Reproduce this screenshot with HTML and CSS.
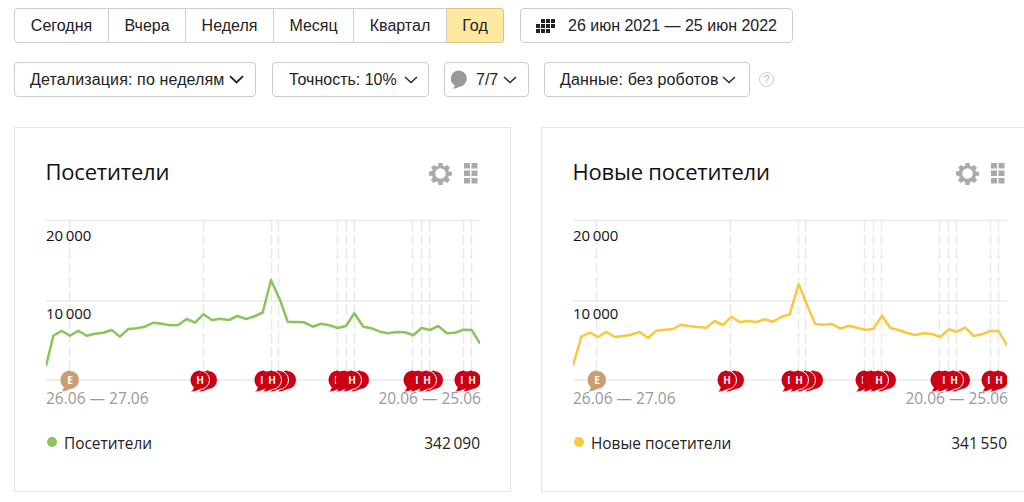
FILE: index.html
```html
<!DOCTYPE html>
<html lang="ru">
<head>
<meta charset="utf-8">
<title>Посетители</title>
<link rel="stylesheet" href="styles.css">
</head>
<body>
<svg class="defs" width="0" height="0" aria-hidden="true">
  <defs>
    <g id="bub">
      <path d="M-6.2 7.2A9.5 9.5 0 1 1-1 9.45Q-5 11.8-8.8 11.6Q-6.5 10-6.2 7.2Z"/>
      <path class="arc" d="M0-9.5A9.5 9.5 0 0 1 0 9.5"/>
    </g>
    <g id="marks">
      <g class="bubble"><use href="#bub" x="162" y="170"/></g>
      <g class="bubble"><use href="#bub" x="154" y="170"/><text x="154" y="174">Н</text></g>
      <g class="bubble"><use href="#bub" x="241" y="170"/></g>
      <g class="bubble"><use href="#bub" x="233" y="170"/></g>
      <g class="bubble"><use href="#bub" x="218" y="170"/><text x="218" y="174">Н</text></g>
      <g class="bubble"><use href="#bub" x="226" y="170"/><text x="226" y="174">Н</text></g>
      <g class="bubble"><use href="#bub" x="314" y="170"/></g>
      <g class="bubble"><use href="#bub" x="292" y="170"/><text x="292" y="174">Н</text></g>
      <g class="bubble"><use href="#bub" x="299" y="170"/></g>
      <g class="bubble"><use href="#bub" x="306" y="170"/><text x="306" y="174">Н</text></g>
      <g class="bubble"><use href="#bub" x="388" y="170"/></g>
      <g class="bubble"><use href="#bub" x="367" y="170"/></g>
      <g class="bubble"><use href="#bub" x="373" y="170"/><text x="373" y="174">Н</text></g>
      <g class="bubble"><use href="#bub" x="381" y="170"/><text x="381" y="174">Н</text></g>
      <g class="bubble"><use href="#bub" x="418" y="170"/><text x="418" y="174">Н</text></g>
      <g class="bubble"><use href="#bub" x="426" y="170"/><text x="426" y="174">Н</text></g>
      <g class="bubble brown"><use href="#bub" x="24" y="170"/><text x="24" y="174">Е</text></g>
    </g>
    <g id="grid">
      <path class="hline" d="M0 10.5H434M0 91H434M0 170H434"/>
      <path class="vline" d="M23.5 11V170M157.5 11V170M225.5 11V170M232.5 11V170M291.5 11V170M300.5 11V170M308.5 11V170M366.5 11V170M375.5 11V170M383.5 11V170M417.5 11V170M425.5 11V170"/>
    </g>
  </defs>
</svg>

<div class="toolbar">
  <div class="row">
    <div class="segments">
      <button class="seg s1">Сегодня</button>
      <button class="seg s2">Вчера</button>
      <button class="seg s3">Неделя</button>
      <button class="seg s4">Месяц</button>
      <button class="seg s5">Квартал</button>
      <button class="seg s6 active">Год</button>
    </div>
    <button class="btn date">
      <svg class="cal" width="19" height="14" viewBox="0 0 19 14">
        <path d="M5 0h4v4H5zM10 0h4v4h-4zM15 0h4v4h-4zM0 5h4v4H0zM5 5h4v4H5zM10 5h4v4h-4zM15 5h4v4h-4zM0 10h4v4H0zM5 10h4v4H5zM10 10h4v4h-4z"/>
      </svg>
      <span>26 июн 2021 — 25 июн 2022</span>
    </button>
  </div>
  <div class="row second">
    <button class="btn b1"><span class="wide">Детализация: по неделям</span><svg class="chev" width="15" height="9" viewBox="0 0 15 9"><path d="M1 1.2l6.500 6.300L14 1.200"/></svg></button>
    <button class="btn b2">Точность: 10%<svg class="chev thin" width="14" height="8" viewBox="0 0 14 8"><path d="M1 1l6 5.500L13 1"/></svg></button>
    <button class="btn b3"><svg class="comment" width="17" height="19" viewBox="0 0 17 19"><path d="M8.500 0.500a8 8 0 0 1 1.500 15.900C8 17.600 5.500 18.600 2.800 18.600 4.200 17.400 4.600 16.200 4.600 15.200A8 8 0 0 1 8.500 0.500Z"/></svg><span class="count">7/7</span><svg class="chev thin" width="14" height="8" viewBox="0 0 14 8"><path d="M1 1l6 5.500L13 1"/></svg></button>
    <button class="btn b4"><span class="wide">Данные: без роботов</span><svg class="chev thin" width="14" height="8" viewBox="0 0 14 8"><path d="M1 1l6 5.500L13 1"/></svg></button>
    <span class="help">?</span>
  </div>
</div>

<div class="cards">
  <section class="card">
    <header class="card-head">
      <h2>Посетители</h2>
      <svg class="gear" width="23" height="23" viewBox="0 0 24 24"><path fill-rule="evenodd" d="M10 1h4l.6 3.100 1.700.7L19 3l2.900 2.900-1.800 2.700.7 1.700L24 10v4l-3.200.6-.7 1.700L21.900 19 19 21.900l-2.700-1.800-1.700.7L14 24h-4l-.6-3.200-1.700-.7L5 21.900 2.100 19l1.800-2.700-.7-1.700L0 14v-4l3.200-.7.7-1.700L2.100 5.900 5 3l2.700 1.800 1.700-.7ZM12 6.500a5.500 5.500 0 1 0 0 11 5.500 5.500 0 0 0 0-11Z"/></svg>
      <svg class="tiles" width="14" height="21" viewBox="0 0 14 21"><path d="M0 0h6v5.500H0zM7.500 0h6v5.500h-6zM0 7.500h6v5.500H0zM7.500 7.500h6v5.500h-6zM0 15h6v5.500H0zM7.500 15h6v5.500h-6z"/></svg>
    </header>
    <div class="chart">
      <svg class="plot" width="434" height="190" viewBox="0 0 434 190">
        <use href="#grid"/>
        <polyline class="series green" points="0,156 7.300,125.700 15.700,120.700 24,125.700 32.300,120.700 40.700,125.700 49,123.700 57.300,122.700 65.700,120 74,126.700 82.300,119 90.700,118.300 99,116.700 107.300,112.700 115.700,113.700 124,115.300 132.300,115 140.700,109 149,112.700 157.300,104.300 166,110 174,108.700 183,110 191.300,106 200,109 208,106.500 216.700,102.500 225,70 234,90 241.700,111.700 250,112 258.300,112.300 266.700,116.700 275,113.700 283.300,115.300 291.700,118 300,116 308.300,103.300 317.300,116.700 325.700,118.300 334,121.700 342.300,123.300 350.700,122 359,122.300 367.300,125.300 375.700,118 384,120 392.300,116 400.700,123.300 409,122.700 417.300,119.700 425.700,120 434,133.700"/>
        <use href="#marks"/>
      </svg>
      <span class="y y20">20&thinsp;000</span>
      <span class="y y10">10&thinsp;000</span>
      <div class="dates"><span>26.06 — 27.06</span><span>20.06 — 25.06</span></div>
    </div>
    <div class="legend">
      <span class="dot green-dot"></span>
      <span class="name">Посетители</span>
      <span class="total">342&thinsp;090</span>
    </div>
  </section>

  <section class="card">
    <header class="card-head">
      <h2>Новые посетители</h2>
      <svg class="gear" width="23" height="23" viewBox="0 0 24 24"><path fill-rule="evenodd" d="M10 1h4l.6 3.100 1.700.7L19 3l2.900 2.900-1.800 2.700.7 1.700L24 10v4l-3.200.6-.7 1.700L21.900 19 19 21.900l-2.700-1.800-1.700.7L14 24h-4l-.6-3.200-1.700-.7L5 21.900 2.100 19l1.800-2.700-.7-1.700L0 14v-4l3.200-.7.7-1.700L2.100 5.900 5 3l2.700 1.800 1.700-.7ZM12 6.500a5.500 5.500 0 1 0 0 11 5.500 5.500 0 0 0 0-11Z"/></svg>
      <svg class="tiles" width="14" height="21" viewBox="0 0 14 21"><path d="M0 0h6v5.500H0zM7.500 0h6v5.500h-6zM0 7.500h6v5.500H0zM7.500 7.500h6v5.500h-6zM0 15h6v5.500H0zM7.500 15h6v5.500h-6z"/></svg>
    </header>
    <div class="chart">
      <svg class="plot" width="434" height="190" viewBox="0 0 434 190">
        <use href="#grid"/>
        <polyline class="series yellow" points="0,155.700 8.300,126.700 16.700,122.700 25,127 33.300,122 41.700,127 50,126 58.300,124.700 66.700,122 75,128 83.300,120.700 91.700,119.700 100,119 108.300,114.700 116.700,116.300 125,117 133.300,117.700 141.700,111 150,115 158.300,106.700 166.700,112 175,111 183.300,112 191.700,109.300 200,111.700 208.300,107 216.700,104.300 225.700,74 234,95 242.300,114 250.700,114.700 259,114 267.300,118.700 275.700,115.700 284,117.700 292.300,120 300.700,118.700 309,105.700 317.300,118 325.700,120 334,123 342.300,125 350.700,123.300 359,124 367.300,127 375.700,119.300 384,121.700 392.300,117.700 400.700,126 409,124.300 417.300,121 425.700,121 434,135.700"/>
        <use href="#marks"/>
      </svg>
      <span class="y y20">20&thinsp;000</span>
      <span class="y y10">10&thinsp;000</span>
      <div class="dates"><span>26.06 — 27.06</span><span>20.06 — 25.06</span></div>
    </div>
    <div class="legend">
      <span class="dot yellow-dot"></span>
      <span class="name">Новые посетители</span>
      <span class="total">341&thinsp;550</span>
    </div>
  </section>
</div>
</body>
</html>
```
FILE: styles.css
```css
html, body { margin: 0; padding: 0; background: #fff; height: 502px; overflow: hidden; }
body { font-family: "Liberation Sans", Arial, sans-serif; color: #222; width: 1024px; }
.defs { position: absolute; }
button { font: inherit; color: inherit; background: #fff; margin: 0; cursor: pointer; }

.toolbar { padding: 8px 0 0 14px; }
.row { display: flex; height: 35px; }
.row.second { margin-top: 19px; align-items: center; }

.segments { display: flex; width: 490px; height: 35px; }
.seg { height: 35px; padding: 0; border: 1px solid #ccc; border-left: 0; font-size: 16px; }
.s1 { width: 95px; border-left: 1px solid #ccc; border-radius: 4px 0 0 4px; }
.s2 { width: 77px; }
.s3 { width: 88px; }
.s4 { width: 80px; }
.s5 { width: 93px; }
.s6 { width: 57px; border-radius: 0 4px 4px 0; }
.active { background: #ffe8a0; border-color: #d9c583; }

.btn { height: 35px; border: 1px solid #ccc; border-radius: 4px; font-size: 16px; padding: 0; display: flex; align-items: center; box-sizing: border-box; white-space: nowrap; }
.date { width: 273px; margin-left: 16px; gap: 13px; padding-left: 15px; }
.cal { fill: #222; }
.wide { letter-spacing: 0.130px; }
.b1 { width: 242px; gap: 4px; padding-left: 15px; }
.b2 { width: 157px; margin-left: 16px; gap: 7px; padding-left: 16px; }
.b3 { width: 85px; margin-left: 15px; padding-left: 5px; }
.count { margin: 0 5px 0 9px; }
.b4 { width: 206px; margin-left: 15px; gap: 3px; padding-left: 15px; }
.chev { fill: none; stroke: #222; stroke-width: 1.800; }
.chev.thin { stroke-width: 1.300; }
.comment { fill: #999; }
.help { width: 15px; height: 15px; margin-left: 9px; box-sizing: border-box; border: 1px solid #ccc; border-radius: 50%; color: #bbb; font-size: 11px; line-height: 13px; text-align: center; }

.cards { display: flex; gap: 30px; margin: 30px 0 0 14px; width: 1010px; overflow: hidden; }
.card { flex: none; width: 497px; height: 365px; box-sizing: border-box; border: 1px solid #e5e5e5; padding: 0 30px 0 31px; }
.card-head { display: flex; align-items: center; height: 78px; padding-top: 4px; }
.card-head h2 { margin: 0 auto 0 -0.500px; font: 400 22px/1 "Open Sans", "Noto Sans", sans-serif; color: #111; letter-spacing: -0.200px; }
.gear { fill: #aaa; margin: 4px 12px 0 0; }
.tiles { fill: #aaa; margin: 4px 2.500px 0 0; }

.chart { position: relative; height: 200px; }
.plot { display: block; }
.hline { stroke: #eaeaea; stroke-width: 1.500; fill: none; }
.vline { stroke: #e8e8e8; stroke-width: 1.500; stroke-dasharray: 10 4; fill: none; }
.series { fill: none; stroke-width: 2.500; stroke-linejoin: round; }
.green { stroke: #8cc45c; }
.yellow { stroke: #f8c93f; }
.bubble { fill: #cc0012; }
.arc { fill: none; stroke: #fff; stroke-width: 1; }
.brown { fill: #cb9d74; }
.bubble text { fill: #fff; font: 700 10px "Open Sans", sans-serif; text-anchor: middle; }

.y { position: absolute; left: 0; font: 15px/1 "Open Sans", "Noto Sans", sans-serif; color: #111; }
.y20 { top: 18px; }
.y10 { top: 96px; }
.dates { position: absolute; left: 0; top: 179px; display: flex; justify-content: space-between; font: 15.500px/1.200 "Open Sans", "Noto Sans", sans-serif; color: #999; width: 435px; }

.legend { display: flex; align-items: center; width: 434px; font: 15.400px/1 "Open Sans", "Noto Sans", sans-serif; color: #222; margin-top: 26px; }
.dot { width: 10px; height: 10px; border-radius: 50%; margin: -3px 7px 0 1px; }
.green-dot { background: #8cc45c; }
.yellow-dot { background: #f8c93f; }
.total { margin-left: auto; font-size: 15.500px; }
```
